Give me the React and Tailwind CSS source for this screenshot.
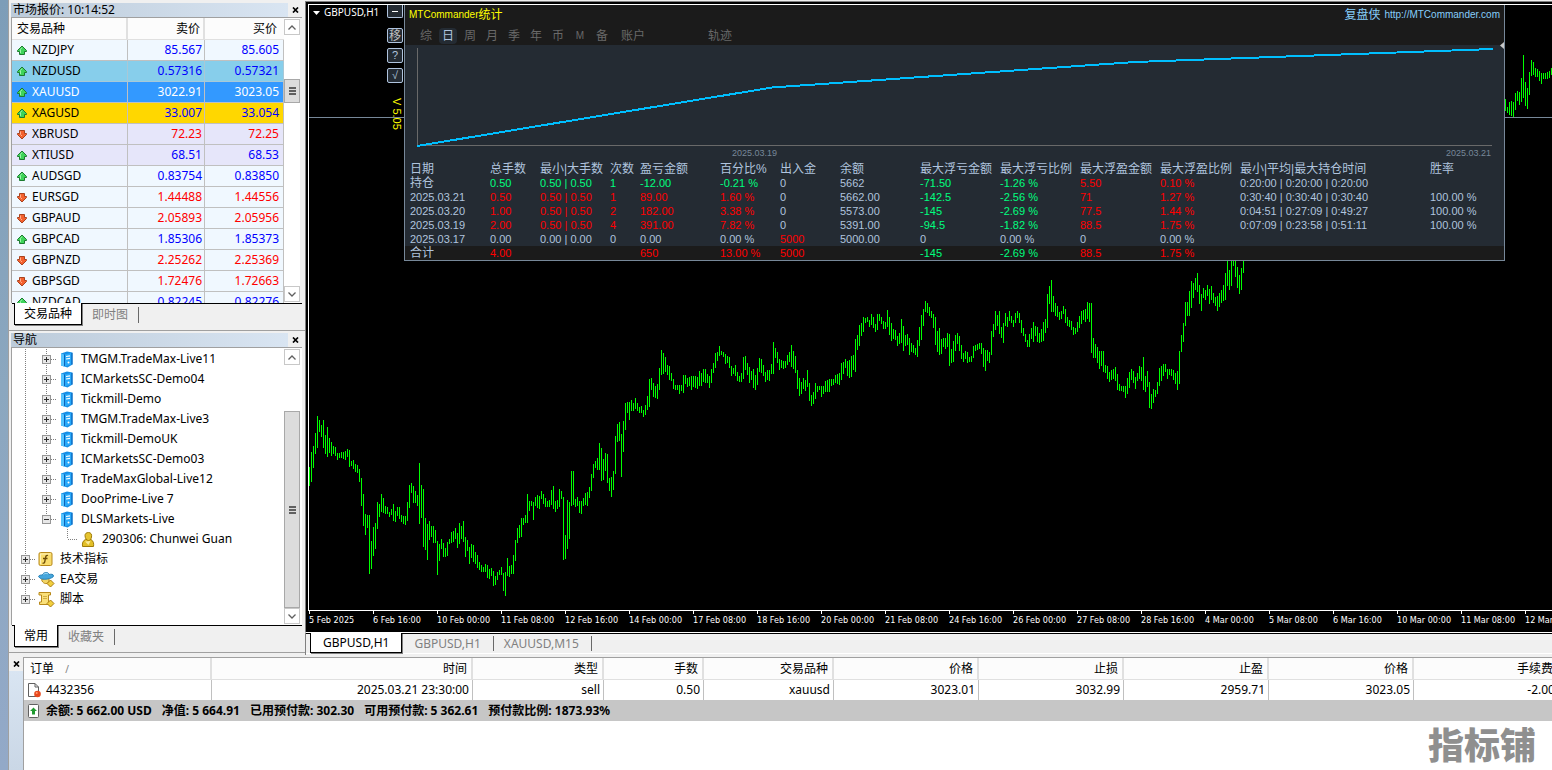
import { clsx } from "clsx";

const quotes = [
  { symbol: "NZDJPY", bid: "85.567", ask: "85.605", up: true, row: "bg-[#f0f8ff]", line: "border-[#c0c0c0]" },
  { symbol: "NZDUSD", bid: "0.57316", ask: "0.57321", up: true, row: "bg-[#87ceeb]", line: "border-[#a9c8d6]" },
  { symbol: "XAUUSD", bid: "3022.91", ask: "3023.05", up: true, selected: true, row: "bg-[#3399ff]", line: "border-[#c0c0c0]" },
  { symbol: "XAGUSD", bid: "33.007", ask: "33.054", up: true, row: "bg-[#ffd700]", line: "border-[#c0c0c0]" },
  { symbol: "XBRUSD", bid: "72.23", ask: "72.25", up: false, row: "bg-[#e6e6fa]", line: "border-[#c0c0c0]" },
  { symbol: "XTIUSD", bid: "68.51", ask: "68.53", up: true, row: "bg-[#e6e6fa]", line: "border-[#c0c0c0]" },
  { symbol: "AUDSGD", bid: "0.83754", ask: "0.83850", up: true, row: "bg-[#f0f8ff]", line: "border-[#c0c0c0]" },
  { symbol: "EURSGD", bid: "1.44488", ask: "1.44556", up: false, row: "bg-[#f0f8ff]", line: "border-[#c0c0c0]" },
  { symbol: "GBPAUD", bid: "2.05893", ask: "2.05956", up: false, row: "bg-[#f0f8ff]", line: "border-[#c0c0c0]" },
  { symbol: "GBPCAD", bid: "1.85306", ask: "1.85373", up: true, row: "bg-[#f0f8ff]", line: "border-[#c0c0c0]" },
  { symbol: "GBPNZD", bid: "2.25262", ask: "2.25369", up: false, row: "bg-[#f0f8ff]", line: "border-[#c0c0c0]" },
  { symbol: "GBPSGD", bid: "1.72476", ask: "1.72663", up: false, row: "bg-[#f0f8ff]", line: "border-[#c0c0c0]" },
  { symbol: "NZDCAD", bid: "0.82245", ask: "0.82276", up: true, row: "bg-[#f0f8ff]", line: "border-[#c0c0c0]" },
];

const servers = [
  "TMGM.TradeMax-Live11",
  "ICMarketsSC-Demo04",
  "Tickmill-Demo",
  "TMGM.TradeMax-Live3",
  "Tickmill-DemoUK",
  "ICMarketsSC-Demo03",
  "TradeMaxGlobal-Live12",
  "DooPrime-Live 7",
];

const timeLabels = [
  "5 Feb 2025", "6 Feb 16:00", "10 Feb 00:00", "11 Feb 08:00", "12 Feb 16:00",
  "14 Feb 00:00", "17 Feb 08:00", "18 Feb 16:00", "20 Feb 00:00", "21 Feb 08:00",
  "24 Feb 16:00", "26 Feb 00:00", "27 Feb 08:00", "28 Feb 16:00", "4 Mar 00:00",
  "5 Mar 08:00", "6 Mar 16:00", "10 Mar 00:00", "11 Mar 08:00", "12 Mar 16:00",
];

// high-low of every bar, two pixels apart
const mainBars = `
467-486 452-482 446-468 433-454 416-448 420-432 425-437 420-448 435-454 427-457
438-453 442-456 446-454 447-456 453-460 453-458 452-458 452-459 451-460 449-457
450-467 461-466 460-469 464-472 465-473 469-482 478-506 494-526 514-535 515-528
515-574 541-569 527-556 523-549 502-529 504-517 494-512 498-513 506-514 507-514
512-517 509-515 504-521 511-522 507-516 507-519 515-522 516-524 516-525 502-521
485-508 483-493 486-503 491-503 495-506 463-524 485-518 489-547 518-550 524-560
521-540 526-537 526-543 530-543 541-575 544-561 539-549 543-557 548-557 542-556
539-544 532-543 531-542 528-539 533-548 523-544 526-539 521-542 537-557 540-551
547-564 544-558 545-562 552-564 555-568 562-570 565-572 567-572 564-572 565-578
569-579 568-576 571-586 576-585 572-580 570-575 567-575 573-591 572-596 558-576
566-577 565-574 555-574 540-561 528-543 525-538 518-537 518-525 515-523 494-523
501-511 501-506 502-520 497-506 495-508 496-509 491-499 494-504 498-507 501-507
500-507 490-505 486-509 501-512 500-509 489-507 491-499 497-560 535-559 500-549
502-539 471-506 471-505 499-507 497-506 501-513 501-514 498-506 493-505 492-506
487-498 474-491 464-478 461-468 458-470 443-470 448-481 459-480 453-471 454-483
478-491 477-497 471-490 436-474 424-442 422-441 434-477 421-452 403-430 402-413
402-420 400-411 403-411 398-409 403-411 407-413 406-413 410-417 405-415 396-410
379-407 378-390 383-397 386-398 384-399 368-390 350-375 353-374 357-372 365-375
366-380 373-381 379-389 385-390 385-390 385-394 385-391 375-393 375-384 378-387
377-386 376-390 376-387 376-388 377-389 371-386 373-386 369-382 369-383 374-383
376-388 369-383 363-373 353-368 352-361 346-356 351-355 352-357 354-364 356-363
357-368 366-376 368-374 365-376 372-381 376-382 373-382 357-379 356-370 363-375
367-383 371-380 369-388 375-390 368-385 358-372 359-373 365-376 372-382 370-380
370-381 364-374 342-374 348-358 352-363 359-370 360-368 361-369 361-368 355-365
352-362 345-367 351-369 356-373 370-389 378-396 382-394 378-389 380-391 370-387
383-401 395-406 392-404 383-399 386-392 386-390 386-397 386-394 381-392 380-392
379-392 379-386 379-385 375-383 374-384 373-385 363-380 362-374 359-368 361-376
360-378 356-377 355-370 339-372 335-350 325-346 323-336 317-332 318-323 317-322
320-327 314-325 317-328 324-332 314-330 314-321 317-324 321-329 322-329 310-327
317-335 323-341 329-339 330-340 336-346 333-344 319-343 326-351 335-346 334-345
338-355 343-352 345-353 348-355 340-357 327-346 315-340 309-326 301-312 303-313
307-316 311-318 314-328 317-345 331-352 328-355 339-354 338-347 338-349 333-347
334-366 349-363 341-362 335-351 333-344 336-351 345-359 353-362 351-359 352-363
357-362 356-362 346-358 345-351 344-350 343-349 343-354 348-367 350-371 350-361
352-363 331-355 324-337 311-330 315-326 311-334 327-338 323-343 313-326 317-327
311-321 316-323 320-327 313-323 311-318 313-323 320-333 328-336 334-342 340-347
334-347 328-339 322-342 326-336 327-342 333-343 329-342 322-341 319-333 294-328
286-304 280-312 296-312 303-316 306-317 312-320 311-319 306-314 309-323 317-326
320-327 321-330 327-335 328-334 322-332 316-328 311-324 310-320 309-322 302-319
303-322 303-353 338-358 344-358 347-363 351-369 351-366 351-372 365-373 366-379
372-382 370-380 369-379 367-381 374-390 384-391 386-391 386-392 386-398 378-394
372-388 369-380 371-383 377-389 373-381 366-379 367-381 357-390 376-392 371-387
382-408 394-409 389-403 390-397 382-394 368-386 366-381 364-376 364-372 369-379
369-375 369-376 370-380 373-384 371-390 351-384 335-352 323-342 302-326 302-316
291-316 281-308 283-298 278-290 273-292 285-304 294-311 288-298 290-300 285-296
289-304 286-300 293-303 297-306 296-311 293-307 290-303 285-301 273-300 258-286
270-290 258-286 258-266 258-277 267-288 275-294 268-290 258-273`;

const lateBars = `
99-111 107-113 102-115 101-116 102-117 93-110 91-101 92-105 78-102 55-98 82-106
88-109 72-95 60-76 62-75 68-77 69-77 71-81 73-84 73-79 73-79 72-79 71-78 68-75`;

function barsPath(bars, startX) {
  return bars
    .trim()
    .split(/\s+/)
    .map((bar, i) => {
      const [high, low] = bar.split("-");
      return `M${startX + i * 2 + 0.5} ${high}V${low}`;
    })
    .join("");
}

const R = "text-[#ff0000]";
const G = "text-[#00ff7f]";
const N = "text-[#b0c4de]";

const statHeads = [
  "日期", "总手数", "最小|大手数", "次数", "盈亏金额", "百分比%", "出入金", "余额",
  "最大浮亏金额", "最大浮亏比例", "最大浮盈金额", "最大浮盈比例", "最小|平均|最大持仓时间", "胜率",
];

const statRows = [
  [["持仓", N], ["0.50", G], ["0.50 | 0.50", G], ["1", G], ["-12.00", G], ["-0.21 %", G], ["0", N], ["5662", N], ["-71.50", G], ["-1.26 %", G], ["5.50", R], ["0.10 %", R], ["0:20:00 | 0:20:00 | 0:20:00", N], ["", N]],
  [["2025.03.21", N], ["0.50", R], ["0.50 | 0.50", R], ["1", R], ["89.00", R], ["1.60 %", R], ["0", N], ["5662.00", N], ["-142.5", G], ["-2.56 %", G], ["71", R], ["1.27 %", R], ["0:30:40 | 0:30:40 | 0:30:40", N], ["100.00 %", N]],
  [["2025.03.20", N], ["1.00", R], ["0.50 | 0.50", R], ["2", R], ["182.00", R], ["3.38 %", R], ["0", N], ["5573.00", N], ["-145", G], ["-2.69 %", G], ["77.5", R], ["1.44 %", R], ["0:04:51 | 0:27:09 | 0:49:27", N], ["100.00 %", N]],
  [["2025.03.19", N], ["2.00", R], ["0.50 | 0.50", R], ["4", R], ["391.00", R], ["7.82 %", R], ["0", N], ["5391.00", N], ["-94.5", G], ["-1.82 %", G], ["88.5", R], ["1.75 %", R], ["0:07:09 | 0:23:58 | 0:51:11", N], ["100.00 %", N]],
  [["2025.03.17", N], ["0.00", N], ["0.00 | 0.00", N], ["0", N], ["0.00", N], ["0.00 %", N], ["5000", R], ["5000.00", N], ["0", N], ["0.00 %", N], ["0", N], ["0.00 %", N], ["", N], ["", N]],
  [["合计", N], ["4.00", R], ["", N], ["", N], ["650", R], ["13.00 %", R], ["5000", R], ["", N], ["-145", G], ["-2.69 %", G], ["88.5", R], ["1.75 %", R], ["", N], ["", N]],
];

const orderHeads = ["时间", "类型", "手数", "交易品种", "价格", "止损", "止盈", "价格", "手续费"];
const orderCells = ["2025.03.21 23:30:00", "sell", "0.50", "xauusd", "3023.01", "3032.99", "2959.71", "3023.05", "-2.00"];

function QuoteArrow({ up }) {
  return (
    <svg width="12" height="12" viewBox="0 0 12 12" className="shrink-0">
      {up ? (
        <path d="M6 2 10.5 6.5V7.500H8.500V10.500H3.500V7.500H1.500V6.500Z" fill="#3fd45a" stroke="#1d7a30" />
      ) : (
        <path d="M6 11 10.500 6.500V5.500H8.500V2.500H3.500V5.500H1.500V6.500Z" fill="#f4612f" stroke="#a8431f" />
      )}
      {up ? <path d="M6 3.500 4.500 5.500V9" fill="none" stroke="#9df5aa" /> : <path d="M4.500 3.500V6.500L6 8" fill="none" stroke="#ffb08c" />}
    </svg>
  );
}

function CloseButton({ className }) {
  return (
    <button type="button" aria-label="关闭" className={clsx("flex items-center justify-center", className)}>
      <svg width="7" height="6" viewBox="0 0 7 6">
        <path d="M1 .5 6 5.500M6 .5 1 5.500" stroke="#000" strokeWidth="1.7" />
      </svg>
    </button>
  );
}

function PaneTitle({ children }) {
  return (
    <div className="flex h-[14px] shrink-0">
      <h2 className="flex flex-1 items-center bg-linear-to-r from-[#bccbda] to-[#d9e5f2] pl-[2px] leading-[14px]">
        {children}
      </h2>
      <CloseButton className="w-[14px]" />
    </div>
  );
}

function ScrollBar({ gapClass, thumbClass, tailClass }) {
  return (
    <div className="flex w-4 shrink-0 flex-col bg-white py-px">
      <button type="button" aria-label="向上滚动" className="flex h-4 items-center justify-center border border-[#c8c8c8] bg-white">
        <svg width="8" height="5" viewBox="0 0 8 5"><path d="M.5 4.5 4 1 7.5 4.5" fill="none" stroke="#606060" strokeWidth="1.3" /></svg>
      </button>
      <div className={gapClass} />
      <div className={clsx("flex flex-col items-center justify-center gap-px border border-[#a8a8a8] bg-[#dcdcdc]", thumbClass)}>
        <span className="h-[2px] w-[7px] bg-[#606060]" />
        <span className="h-[2px] w-[7px] bg-[#606060]" />
        <span className="h-[2px] w-[7px] bg-[#606060]" />
      </div>
      <div className={tailClass} />
      <button type="button" aria-label="向下滚动" className="flex h-4 items-center justify-center border border-[#c8c8c8] bg-white">
        <svg width="8" height="5" viewBox="0 0 8 5"><path d="M.5 .5 4 4 7.5 .5" fill="none" stroke="#606060" strokeWidth="1.3" /></svg>
      </button>
    </div>
  );
}

function PaneTabs({ active, other }) {
  return (
    <div className="ml-px flex h-[27px] shrink-0 items-start border-t border-black pl-[2px]">
      <button type="button" className="-mt-px h-[22px] border-x border-b border-black bg-white px-[9px] leading-[20px] shadow-[1px_1px_0_#808080]">
        {active}
      </button>
      <button type="button" className="mt-[3px] h-4 border-r border-[#696969] px-[10px] leading-[14px] text-[#808080]">
        {other}
      </button>
    </div>
  );
}

function MarketWatch() {
  return (
    <section className="flex h-[330px] shrink-0 flex-col pt-[3px] pr-[3px] pl-[2px]">
      <PaneTitle>市场报价: 10:14:52</PaneTitle>
      <div className="flex min-h-0 flex-1 overflow-hidden border-t border-l border-[#a0a0a0] pr-[2px]">
        <div className="min-w-0 flex-1 overflow-hidden">
          <table className="w-full table-fixed border-separate border-spacing-0">
            <colgroup>
              <col className="w-[116px]" />
              <col className="w-[77px]" />
              <col />
            </colgroup>
            <thead>
              <tr className="bg-[#fcfcfc]">
                <th className="h-[22px] border-r-2 border-b border-[#e0e0e0] p-0 pl-[5px] text-left font-normal">交易品种</th>
                <th className="h-[22px] border-r-2 border-b border-[#e0e0e0] p-0 pr-[3px] text-right font-normal">卖价</th>
                <th className="h-[22px] border-b border-[#e0e0e0] p-0 pr-[7px] text-right font-normal">买价</th>
              </tr>
            </thead>
            <tbody>
              {quotes.map((q) => {
                const price = q.selected ? "text-white" : q.up ? "text-[#0000ff]" : "text-[#ff0000]";
                return (
                  <tr key={q.symbol} className={q.row}>
                    <td className={clsx("h-[21px] border-r border-b p-0 pl-1", q.line)}>
                      <span className={clsx("flex items-center gap-1 leading-[20px]", q.selected && "text-white")}>
                        <QuoteArrow up={q.up} />
                        {q.symbol}
                      </span>
                    </td>
                    <td className={clsx("h-[21px] border-r border-b p-0 pr-[2px] text-right leading-[20px]", q.line, price)}>{q.bid}</td>
                    <td className={clsx("h-[21px] border-r border-b p-0 pr-1 text-right leading-[20px]", q.line, price)}>{q.ask}</td>
                  </tr>
                );
              })}
            </tbody>
          </table>
        </div>
        <ScrollBar gapClass="h-11" thumbClass="h-6" tailClass="flex-1" />
      </div>
      <PaneTabs active="交易品种" other="即时图" />
    </section>
  );
}

// one 21x20 cell of the tree's dotted guides
function Guide({ line, half, elbow, toggle }) {
  return (
    <svg width="21" height="20" viewBox="0 0 21 20" className="shrink-0" shapeRendering="crispEdges">
      <g stroke="#808080" strokeDasharray="1 1" fill="none">
        {line && <path d="M10.5 0V20" />}
        {half && <path d="M10.5 0V10" />}
        {(toggle || elbow) && <path d="M11 10.5H21" />}
      </g>
      {toggle && (
        <>
          <rect x="6.5" y="6.5" width="8" height="8" fill="#e8e8e8" stroke="#969696" />
          <path d="M8 10.5H13" stroke="#303030" />
          {toggle === "plus" && <path d="M10.5 8V13" stroke="#303030" />}
        </>
      )}
    </svg>
  );
}

function TreeIcon({ kind }) {
  return (
    <span className="flex w-[21px] shrink-0 items-center pl-[2px]">
      <svg width="17" height="17" viewBox="0 0 17 17">
        {kind === "server" && (
          <>
            <path d="M2 2.500 8 .5 13.500 1.500V13.500L8.500 16.500 2 14.500Z" fill="#168fe6" />
            <path d="M2 2.500 5 3.500V15.500L2 14.500Z" fill="#55c4ff" />
            <path d="M5.500 3.500 12 2V13.500L5.500 15.500Z" fill="#27a9fa" />
            <path d="M5.500 3.500V15" stroke="#0a63b8" />
            <path d="M7 5.500 11 4.800M7 8 11 7.300" stroke="#fff" strokeWidth="1.200" />
            <circle cx="9.500" cy="11.500" r="1" fill="#fff" />
            <path d="M13 2V13.500" stroke="#0a63b8" />
          </>
        )}
        {kind === "account" && (
          <>
            <path d="M2.500 15.500C2 12 3 9.500 5.500 8.500L11 8.500C13.500 10 14 12.500 13.500 15.500Z" fill="#e2bf28" stroke="#a07c08" />
            <path d="M5 4.500C5 2.500 6.500 1.500 8.500 1.500C11 1.500 12 3.500 11.500 6C11.200 8 10 9.500 8.500 9.500C6.500 9.500 5 7 5 4.500Z" fill="#e6c430" stroke="#a07c08" />
            <path d="M5 10.500 8.500 14 10.500 10" fill="#fbeb9a" />
          </>
        )}
        {kind === "indicator" && (
          <>
            <rect x="1" y="1.500" width="13" height="13" rx="1.500" fill="#f8dc6c" stroke="#b8891a" />
            <path d="M2.500 13V3H12.500" fill="none" stroke="#fdf2b8" />
            <path d="M10 4.500C8.300 3.800 7.800 5 7.500 7L6.800 10.500C6.500 12 5.800 12.500 4.500 12M5 7.500H9.500" fill="none" stroke="#6b4a05" strokeWidth="1.300" />
          </>
        )}
        {kind === "expert" && (
          <>
            <path d="M3.500 8.500C4.500 12.500 8.500 14 11 11V7Z" fill="#f2d566" stroke="#b8891a" />
            <path d="M.5 5.500C1 4 3 4 4.500 4C5 1 10.500 .5 11 3.500C13 3 15.500 3 15.500 5C15.500 7.500 3 10.500 .5 5.500Z" fill="#45a6dc" stroke="#2a83b8" />
            <path d="M5.500 3.500C7 2 9 2 10 3" fill="none" stroke="#9fd8f5" />
            <path d="M12.500 9 16 12.500 12.500 16 9 12.500Z" fill="#f2cf3d" stroke="#a97c10" />
          </>
        )}
        {kind === "script" && (
          <>
            <path d="M1 1.500H12.500V4H10.500V11H12V13.500H1.500V11H3.500V4H1Z" fill="#f9e07a" stroke="#b8891a" />
            <path d="M5.500 5.500H9M5.500 7.500H9" stroke="#a97c10" strokeDasharray="1 1" />
            <path d="M12.500 9 16 12.500 12.500 16 9 12.500Z" fill="#f2cf3d" stroke="#a97c10" />
          </>
        )}
      </svg>
    </span>
  );
}

function Navigator() {
  return (
    <section className="flex min-h-0 flex-1 flex-col border-y border-[#a0a0a0] pt-[2px] pr-[3px] pl-[2px]">
      <PaneTitle>导航</PaneTitle>
      <div className="flex min-h-0 flex-1 overflow-hidden border-t border-l border-[#a0a0a0] bg-white pr-[2px]">
        <ul className="min-w-0 flex-1 overflow-hidden pt-px pl-[3px]">
          {servers.map((name) => (
            <li key={name} className="flex h-5 items-center">
              <Guide line />
              <Guide line toggle="plus" />
              <TreeIcon kind="server" />
              <span className="pl-[3px]">{name}</span>
            </li>
          ))}
          <li className="flex h-5 items-center">
            <Guide line />
            <Guide half toggle="minus" />
            <TreeIcon kind="server" />
            <span className="pl-[3px]">DLSMarkets-Live</span>
          </li>
          <li className="flex h-5 items-center">
            <Guide line />
            <Guide />
            <Guide half elbow />
            <TreeIcon kind="account" />
            <span className="pl-[3px]">290306: Chunwei Guan</span>
          </li>
          <li className="flex h-5 items-center">
            <Guide line toggle="plus" />
            <TreeIcon kind="indicator" />
            <span className="pl-[3px]">技术指标</span>
          </li>
          <li className="flex h-5 items-center">
            <Guide line toggle="plus" />
            <TreeIcon kind="expert" />
            <span className="pl-[3px]">EA交易</span>
          </li>
          <li className="flex h-5 items-center">
            <Guide half toggle="plus" />
            <TreeIcon kind="script" />
            <span className="pl-[3px]">脚本</span>
          </li>
        </ul>
        <ScrollBar gapClass="h-[46px]" thumbClass="flex-1" tailClass="h-0" />
      </div>
      <PaneTabs active="常用" other="收藏夹" />
    </section>
  );
}

function StatsPanel() {
  return (
    <div className="flex min-w-0 flex-1 flex-col border-x border-b border-[#778899] bg-[#242b33] font-['Liberation_Sans','Noto_Sans_CJK_SC',sans-serif] text-[#b0c4de]">
      <div className="h-10 bg-[#1b1b1b]">
        <div className="flex h-[19px] items-center justify-between pr-1 pl-1">
          <h1 className="flex items-center text-[#ffff00]">
            <span className="text-[10px]">MTCommander</span>
            <span className="text-xs">统计</span>
          </h1>
          <a href="http://MTCommander.com" className="flex items-center gap-1 text-[#87cefa]">
            <span className="text-xs">复盘侠</span>
            <span className="text-[10px]">http://MTCommander.com</span>
          </a>
        </div>
        <div className="mt-1 flex h-4 pl-[10px] text-xs leading-4 text-[#696969]">
          <button type="button" className="w-[22px]">综</button>
          <button type="button" className="mx-[2px] w-[18px] rounded-sm bg-[#242b33] text-[#b0c4de]">日</button>
          <button type="button" className="w-[22px]">周</button>
          <button type="button" className="w-[22px]">月</button>
          <button type="button" className="w-[22px]">季</button>
          <button type="button" className="w-[22px]">年</button>
          <button type="button" className="w-[22px]">币</button>
          <button type="button" className="w-[22px] text-[10px]">M</button>
          <button type="button" className="w-[22px]">备</button>
          <button type="button" className="ml-[6px] w-7">账户</button>
          <button type="button" className="ml-[59px] w-7">轨迹</button>
        </div>
      </div>
      <svg viewBox="405 45 1099 102" preserveAspectRatio="none" className="h-[102px] w-full shrink-0 overflow-visible">
        <path d="M417.5 48V145.500H1492" fill="none" stroke="#696969" shapeRendering="crispEdges" />
        <polyline points="417,146 772,87.500 1135,62 1493,49" fill="none" stroke="#00bfff" strokeWidth="2" shapeRendering="crispEdges" />
        <path d="M1500 45.500 1504 42V49Z" fill="#c8c8c8" />
      </svg>
      <div className="flex h-4 justify-between pr-[13px] pl-[327px] text-[9px] leading-3 text-[#778899]">
        <span>2025.03.19</span>
        <span>2025.03.21</span>
      </div>
      <table className="w-full table-fixed border-separate border-spacing-0 whitespace-nowrap">
        <colgroup>
          <col className="w-[85px]" />
          <col className="w-[50px]" />
          <col className="w-[70px]" />
          <col className="w-[30px]" />
          <col className="w-[80px]" />
          <col className="w-[60px]" />
          <col className="w-[60px]" />
          <col className="w-[80px]" />
          <col className="w-[80px]" />
          <col className="w-[80px]" />
          <col className="w-[80px]" />
          <col className="w-[80px]" />
          <col className="w-[190px]" />
          <col />
        </colgroup>
        <thead>
          <tr>
            {statHeads.map((head) => (
              <th key={head} className="h-[13px] p-0 text-left text-xs leading-[13px] font-normal first:pl-[5px]">{head}</th>
            ))}
          </tr>
        </thead>
        <tbody>
          {statRows.map((row, i) => (
            <tr key={row[0][0]} className={clsx(i === statRows.length - 1 && "bg-[#1b1b1b]")}>
              {row.map(([text, color], j) => (
                <td
                  key={j}
                  className={clsx(
                    "h-[14px] p-0 leading-[14px] first:pl-[5px]",
                    text === "持仓" || text === "合计" ? "text-xs leading-[14px]" : "text-[11px]",
                    color,
                  )}
                >
                  {text}
                </td>
              ))}
            </tr>
          ))}
        </tbody>
      </table>
    </div>
  );
}

function ChartWindow() {
  return (
    <main className="flex min-w-0 flex-1 flex-col pt-px">
      <div className="flex min-h-0 flex-1 flex-col border-t border-l border-[#808080] bg-black pt-[2px] pl-[2px]">
        <div className="relative min-h-0 flex-1 overflow-hidden border-t border-b border-l border-white">
          <svg viewBox="309 5 1243 605" width="1243" height="605" shapeRendering="crispEdges" className="max-w-none">
            <path d="M309 117.500H1552" stroke="#778899" />
            <path d={barsPath(mainBars, 309)} stroke="#00ff00" />
            <path d={barsPath(lateBars, 1505)} stroke="#00ff00" />
          </svg>
          <div className="absolute top-0 left-1 flex h-4 items-center gap-1 font-['Noto_Sans',sans-serif] text-[10px] text-white">
            <svg width="7" height="4" viewBox="0 0 7 4"><path d="M0 0H7L3.500 4Z" fill="#fff" /></svg>
            GBPUSD,H1
          </div>
          <div className="absolute top-0 right-[47px] left-[78px] flex">
            <div className="flex w-[17px] flex-col items-start gap-[5px] text-[#b0c4de]">
              <button type="button" aria-label="最小化" className="mb-[5px] flex h-[13px] w-4 items-center justify-center rounded-b-[2px] border-x border-b border-[#b0c4de] bg-[#242b33]">
                <span className="h-px w-[6px] bg-white" />
              </button>
              <button type="button" className="flex h-[15px] w-4 items-center justify-center rounded-[2px] border border-[#b0c4de] bg-[#242b33] text-xs leading-[13px] text-[#c0c0c0]">移</button>
              <button type="button" className="flex h-[15px] w-4 items-center justify-center rounded-[2px] border border-[#b0c4de] bg-[#242b33] font-['Liberation_Sans',sans-serif] text-[11px] leading-[13px]">?</button>
              <button type="button" className="flex h-[15px] w-4 items-center justify-center rounded-[2px] border border-[#b0c4de] bg-[#242b33] font-['Liberation_Sans',sans-serif] text-[11px] leading-[13px]">√</button>
              <span className="mt-[10px] ml-1 font-['Liberation_Sans',sans-serif] text-[11px] leading-3 text-[#ffff00] [writing-mode:vertical-rl]">V 5.05</span>
            </div>
            <StatsPanel />
          </div>
        </div>
        <div className="flex h-[21px] shrink-0 overflow-hidden pl-px">
          {timeLabels.map((label) => (
            <div key={label} className="flex w-16 shrink-0 flex-col font-['DejaVu_Sans_Condensed','DejaVu_Sans',sans-serif] text-[9px] leading-3 whitespace-nowrap text-white">
              <span className="h-[3px] w-px bg-white" />
              {label}
            </div>
          ))}
        </div>
      </div>
      <div className="h-[23px] shrink-0 border-t border-l border-t-white border-l-[#808080] bg-[#f0f0f0]">
        <div className="flex h-[21px] items-start border-t border-b border-t-black border-b-white pl-1">
          <button type="button" className="-mt-px h-5 border-x border-b border-black bg-white px-3 leading-[20px] shadow-[1px_1px_0_#808080]">GBPUSD,H1</button>
          <button type="button" className="mt-[2px] h-[15px] border-r border-[#696969] px-3 leading-4 text-[#808080]">GBPUSD,H1</button>
          <button type="button" className="mt-[2px] h-[15px] border-r border-[#696969] pr-3 pl-[10px] leading-4 text-[#808080]">XAUUSD,M15</button>
        </div>
      </div>
    </main>
  );
}

function Terminal() {
  return (
    <section className="flex h-[115px] shrink-0 border-l border-[#a0a0a0] pt-[2px]">
      <div className="flex w-[14px] shrink-0 flex-col">
        <CloseButton className="h-[14px]" />
        <div className="flex-1 bg-linear-to-b from-[#d9e5f2] to-[#cad7e6]" />
      </div>
      <div className="relative min-w-0 flex-1 overflow-hidden border-t border-l border-[#a0a0a0] bg-white">
        <table className="w-[1535px] table-fixed border-separate border-spacing-0">
          <colgroup>
            <col className="w-[188px]" />
            <col className="w-[261px]" />
            <col className="w-[131px]" />
            <col className="w-[100px]" />
            <col className="w-[130px]" />
            <col className="w-[145px]" />
            <col className="w-[145px]" />
            <col className="w-[145px]" />
            <col className="w-[145px]" />
            <col />
          </colgroup>
          <thead>
            <tr className="bg-[#fcfcfc]">
              <th className="h-[22px] border-r-2 border-b border-[#e0e0e0] p-0 pl-[6px] text-left font-normal">
                订单 <span className="pl-2 text-[10px] text-[#808080]">/</span>
              </th>
              {orderHeads.map((head, i) => (
                <th key={i} className="h-[22px] border-r-2 border-b border-[#e0e0e0] p-0 pr-1 text-right font-normal">{head}</th>
              ))}
            </tr>
          </thead>
          <tbody>
            <tr>
              <td className="h-5 border-r border-[#c0c0c0] p-0 pl-[3px]">
                <span className="flex items-center gap-[5px] leading-[20px]">
                  <svg width="14" height="16" viewBox="0 0 14 16">
                    <path d="M1.500 1.500H8L11.500 5V14.500H1.500Z" fill="#fff" stroke="#606060" />
                    <path d="M8 1.500V5H11.500" fill="none" stroke="#606060" />
                    <circle cx="10.500" cy="12" r="3.300" fill="#e8481c" />
                    <circle cx="9.700" cy="11" r="1" fill="#ff9a70" />
                  </svg>
                  4432356
                </span>
              </td>
              {orderCells.map((cell, i) => (
                <td key={i} className="h-5 border-r border-[#c0c0c0] p-0 pr-[3px] text-right leading-[20px]">{cell}</td>
              ))}
            </tr>
            <tr className="bg-[#c6c6c6]">
              <td colSpan={10} className="h-[21px] p-0 pl-[3px]">
                <span className="flex items-center gap-[10px] leading-[21px] font-bold whitespace-nowrap">
                  <span className="flex items-center gap-[5px]">
                    <svg width="14" height="14" viewBox="0 0 14 14">
                      <rect x="1.500" y=".5" width="10" height="13" rx="1" fill="#fff" stroke="#606060" />
                      <path d="M6.500 3.500 10 7H8V10.500H5V7H3Z" fill="#1f9a30" />
                    </svg>
                    余额: 5 662.00 USD
                  </span>
                  <span>净值: 5 664.91</span>
                  <span>已用预付款: 302.30</span>
                  <span>可用预付款: 5 362.61</span>
                  <span>预付款比例: 1873.93%</span>
                </span>
              </td>
            </tr>
          </tbody>
        </table>
        <p className="absolute right-4 bottom-1 font-['Noto_Sans_CJK_SC',sans-serif] text-4xl leading-[46px] font-black text-[#8f8f8f]">
          指标铺
        </p>
      </div>
    </section>
  );
}

export default function App() {
  return (
    <div className="flex h-screen overflow-hidden bg-[#f0f0f0] font-['Noto_Sans','Noto_Sans_CJK_SC',sans-serif] text-xs text-black">
      <div className="w-2 shrink-0 bg-linear-to-b from-[#7d9db8] via-[#8ba7bf] to-[#93a9c8]" />
      <div className="flex min-w-0 flex-1 flex-col">
        <div className="flex min-h-0 flex-1">
          <aside className="flex w-[297px] shrink-0 flex-col border-l border-[#a0a0a0] pb-[2px]">
            <MarketWatch />
            <Navigator />
          </aside>
          <ChartWindow />
        </div>
        <Terminal />
      </div>
    </div>
  );
}
